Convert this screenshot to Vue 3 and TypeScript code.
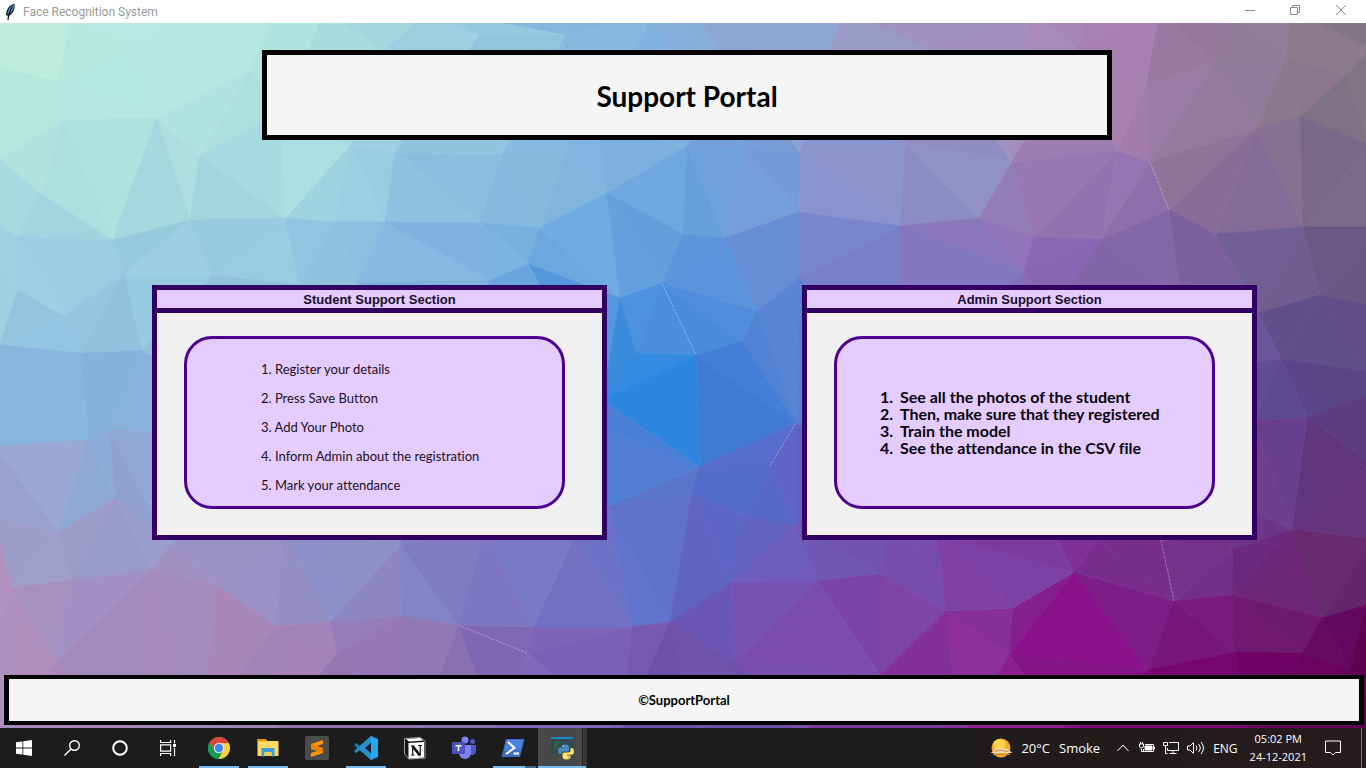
<script setup lang="ts">
type Point = [number, number]
type Tri = [number, number, number]

const appTitle = 'Face Recognition System'

const studentSteps = [
  'Register your details',
  'Press Save Button',
  'Add Your Photo',
  'Inform Admin about the registration',
  'Mark your attendance',
]

const adminSteps = [
  'See all the photos of the student',
  'Then, make sure that they registered',
  'Train the model',
  'See the attendance in the CSV file',
]

/* Corners of the facets, as x,y pairs */
const vertices: Point[] = `
-60,-20 300,-40 700,-40 1100,-40 1440,-20 1440,300 1440,800 1000,800 600,800 250,800 -60,800 -60,400 -60,180
0,68 57,82 70,23 135,45 63,120 157,118 200,155 112,240 190,220 40,193 0,160 18,237 124,274 213,275 18,290 63,316
285,218 350,145 395,152 385,222 335,222 325,10 250,70 383,52 430,10 282,110 0,345 80,353 142,351 300,285 358,282
502,154 480,223 540,228 528,264 568,150 607,193 597,130 687,146 683,234 725,238 744,147 800,151 799,212 799,278
662,283 620,298 757,311 900,226 905,143 490,280 565,35 480,35 655,10 725,60 695,10 830,48 845,10 930,50 1030,10
979,218 1012,162 1033,237 1102,239 1117,150 1150,162 1169,210 1216,234 1145,86 1215,63 1286,57 1346,74 1257,128
1300,116 1370,145 1303,227 1380,227 1024,272 1055,310 1182,300 1258,313 1320,295 1370,305 1370,48 1160,10 1225,10 1290,10
1078,48 109,430 88,440 -5,446 116,498 58,532 -5,518 12,588 70,580 152,570 218,586 55,662 276,626 330,621 337,653
402,616 400,545 283,530 170,545 458,625 527,653 533,627 632,627 670,622 636,353 696,355 742,341 700,467 692,494
770,466 796,423 602,427 607,506 745,517 795,525 731,582 818,581 880,574 575,535 735,662 485,530 602,400
946,611 1013,608 1074,572 1174,601 1232,595 1233,549 1292,529 1322,618 1366,605 1148,670 1235,652 1302,653
1009,655 1281,359 1307,417 1370,372 1370,393 1370,463 1240,364 1370,538 1098,540 1253,420 1350,670 880,675 455,350 350,400
450,450 300,440 900,400 900,480 1000,430 1100,400 1180,480 937,535 1161,540
-8,745 70,750 135,730 200,725 275,730 420,735 500,740 620,735 700,740 800,735 960,740 1070,735 1250,740`
  .trim()
  .split(/\s+/)
  .map((p) => p.split(',').map(Number) as Point)

/* Colour samples across the backdrop, as x,y,hex */
const samples = `
20,40,c0efdf 130,60,bdeade 200,50,b6e8e0 290,35,afe3e0 380,35,a5d9e0 430,35,9ccfe0 500,35,95c9e0 600,35,84b8df
700,35,85aedb 790,35,90a6d4 880,35,9b9bc8 970,35,a193c2 1040,35,a98abb 1120,40,a57faf 1200,40,97799f 1250,40,907a98
1320,40,8c7a8d 1355,60,807482 30,110,b7e9dd 110,90,b5e8df 220,90,b0e3df 1130,110,a57fae 1180,110,9a7ba3
1220,100,937b9d 1300,90,8e788f 1355,110,7f7284 20,150,b3e4df 80,160,aedfe0 115,170,aee3df 165,170,a5d7df
180,150,b1e0df 240,180,a4d6df 290,160,abdedf 370,180,99cde0 320,190,9dd2df 430,180,8ec1e0 525,180,86b8dd
570,200,82b6df 620,165,7eb3e0 650,195,70a8e0 700,200,68a0dc 740,190,72a2dc 770,200,749ad8 830,190,8792ce
880,170,8b94cb 950,170,9090c6 1000,190,9480bb 1060,180,9878b3 1110,190,9374b0 1200,170,907499 1230,200,846b97
1290,160,86708f 1330,180,7b6989 50,215,a2d6e0 10,260,9ed0e0 60,260,9bcee0 130,260,98cde0 240,250,98cce0
310,260,8ec3e0 400,250,84b8e0 470,260,7cb0e0 510,250,7ab1df 570,250,6ca8df 640,250,64a0de 700,260,5b95db
760,260,688ed6 830,250,7988cd 880,270,787fc8 940,260,8378c0 1000,250,8f72b8 1060,260,8a68b3 1130,250,8366a8
1200,260,7c619f 1270,260,705f92 1330,270,6c5985 30,320,94c6e0 100,320,92c4e0 60,350,8fc3e0 40,400,84b5de
120,400,80b3df 640,320,4c91dd 620,380,368be0 660,390,2a86df 720,390,3781db 700,320,4a8cda 740,310,528bdb
780,330,5784d4 780,370,5080d3 740,400,447bd6 1300,330,5f508a 1270,340,69559a 1270,390,5e4c92 1340,380,5a4789
1330,430,5d3b80 1260,450,6a4090 1340,470,60357c 1280,480,643e8c 1265,500,6d398a 40,470,98a6d2 90,400,87b2dc
90,480,8fa9d6 130,460,8aaad8 20,540,9f9fca 80,550,9e9dca 130,520,9a9ccb 640,460,5180d6 650,500,5c74ca
740,480,546cca 770,500,596ac8 790,470,6065c6 700,560,6064c3 640,570,5f71ca 40,620,a892bf 10,640,ae8eba
100,620,a08fc3 150,640,a68abb 190,620,a38dbd 230,650,a586b7 270,580,9a92c6 310,580,9690c8 350,570,8c8fca
380,600,8d84c2 300,650,a281b6 370,650,9478b6 430,590,8282c7 470,590,8477c1 520,590,787ac6 560,590,7470c4
590,560,6d73c8 500,640,8068b4 560,640,7d64b6 620,640,7858b2 700,640,6b58b8 770,620,7451b2 800,550,6c5bba
860,560,7353b2 850,620,7c45a9 900,620,7c42a5 930,560,7a4eb0 900,660,84309a 980,580,7e40a4 1000,560,7c3fa5
1050,560,802d95 980,640,883098 1040,620,86208f 1090,640,870f8a 1130,610,7e2088 1170,570,78308d 1120,560,7b3090
1130,650,7a1078 1200,630,78187c 1200,570,733088 1260,570,6e2a7f 1270,630,6e1a70 1340,570,682a6e 1300,600,6b206f
1340,630,650a62 1280,640,6b1468 1180,670,7a0070 1250,665,6e0063 1340,670,600055 1300,700,680060 1000,700,8f2090
700,700,7050a8 400,700,9673ac 100,700,a885b5 1364,700,5d004f`
  .trim()
  .split(/\s+/)
  .map((s) => {
    const [x, y, hex] = s.split(',')
    const n = parseInt(hex, 16)
    return { x: Number(x), y: Number(y), rgb: [n >> 16, (n >> 8) & 255, n & 255] }
  })

/* Bowyer-Watson triangulation */
function triangulate(points: Point[]): Tri[] {
  const all: Point[] = [...points, [-9000, -9000], [12000, -9000], [600, 15000]]
  const n = points.length
  const circle = (t: Tri) => {
    const [[ax, ay], [bx, by], [cx, cy]] = t.map((i) => all[i])
    const d = 2 * (ax * (by - cy) + bx * (cy - ay) + cx * (ay - by)) || 0.0001
    const a = ax * ax + ay * ay
    const b = bx * bx + by * by
    const c = cx * cx + cy * cy
    const x = (a * (by - cy) + b * (cy - ay) + c * (ay - by)) / d
    const y = (a * (cx - bx) + b * (ax - cx) + c * (bx - ax)) / d
    return { t, x, y, r: (ax - x) ** 2 + (ay - y) ** 2 }
  }
  let open = [circle([n, n + 1, n + 2])]
  for (let i = 0; i < n; i++) {
    const [px, py] = all[i]
    const edges = new Map<string, [number, number]>()
    const kept: typeof open = []
    for (const c of open) {
      if ((px - c.x) ** 2 + (py - c.y) ** 2 >= c.r) {
        kept.push(c)
        continue
      }
      for (const [a, b] of [[c.t[0], c.t[1]], [c.t[1], c.t[2]], [c.t[2], c.t[0]]]) {
        const key = a < b ? `${a}-${b}` : `${b}-${a}`
        if (edges.has(key)) edges.delete(key)
        else edges.set(key, [a, b])
      }
    }
    open = kept
    edges.forEach(([a, b]) => open.push(circle([a, b, i])))
  }
  return open.map((c) => c.t).filter((t) => t.every((i) => i < n))
}

function colourAt(x: number, y: number, shade: number): string {
  const sum = [0, 0, 0]
  let total = 0
  for (const s of samples) {
    const w = 1 / ((s.x - x) ** 2 + (s.y - y) ** 2 + 60) ** 2
    total += w
    s.rgb.forEach((v, k) => (sum[k] += v * w))
  }
  return `rgb(${sum.map((v) => Math.max(0, Math.round(v / total + shade))).join(',')})`
}

const clamp = (v: number, low: number, high: number) => Math.min(high, Math.max(low, v))

const facets = triangulate(vertices).map((t) => {
  const pts = t.map((i) => vertices[i])
  const cx = clamp((pts[0][0] + pts[1][0] + pts[2][0]) / 3, 5, 1361)
  const cy = clamp((pts[0][1] + pts[1][1] + pts[2][1]) / 3, 30, 715)
  const shade = (Math.round(cx * 7 + cy * 13) % 5) - 2
  return { points: pts.map((p) => p.join(',')).join(' '), fill: colourAt(cx, cy, shade) }
})
</script>

<template>
  <div class="screen">
    <header class="titlebar">
      <svg class="feather" viewBox="0 0 12 18" aria-hidden="true">
        <path d="M10.500 1C6 1 2 6 2 12l2 1C8 12 11.500 7 10.500 1z" fill="#15202f" />
        <path d="M9.800 2C5.500 4 3.500 8 3.500 11.500 8 9.500 10 6 9.800 2z" fill="#6f9dd6" />
        <path d="M8.500 4C6 7 4.500 11 4 17" fill="none" stroke="#0a0d14" stroke-width="1.200" />
      </svg>
      <span class="apptitle">{{ appTitle }}</span>
      <div class="controls">
        <button aria-label="Minimize"><svg viewBox="0 0 12 12"><path d="M1 6.500h10" /></svg></button>
        <button aria-label="Restore"><svg viewBox="0 0 12 12"><path d="M1.500 3.500h7v7h-7zM3.500 3.500v-2h7v7h-2" /></svg></button>
        <button aria-label="Close"><svg viewBox="0 0 12 12"><path d="M1 1l10 10M11 1L1 11" /></svg></button>
      </div>
    </header>

    <main class="portal">
      <svg class="backdrop" viewBox="0 23 1366 705" preserveAspectRatio="none" aria-hidden="true">
        <polygon v-for="(f, i) in facets" :key="i" :points="f.points" :fill="f.fill" :stroke="f.fill" stroke-width="0.700" />
        <path
          d="M662 283L696 355M796 423L770 466M1150 162L1169 210M1161 540L1174 601M458 625L527 653"
          fill="none" stroke="#fff" stroke-opacity="0.300" stroke-dasharray="3 1"
        />
      </svg>

      <h1 class="banner">Support Portal</h1>

      <div class="cards">
        <section class="card">
          <h2>Student Support Section</h2>
          <div class="cardbody">
            <ol class="panel student">
              <li v-for="(step, i) in studentSteps" :key="step">{{ i + 1 }}. {{ step }}</li>
            </ol>
          </div>
        </section>
        <section class="card">
          <h2>Admin Support Section</h2>
          <div class="cardbody">
            <ol class="panel admin">
              <li v-for="(step, i) in adminSteps" :key="step"><span class="num">{{ i + 1 }}.</span>{{ step }}</li>
            </ol>
          </div>
        </section>
      </div>

      <footer class="copyright">©SupportPortal</footer>
    </main>

    <nav class="taskbar" aria-label="Taskbar">
      <button class="sys" aria-label="Start">
        <svg width="16" height="16" viewBox="0 0 16 16" fill="#fff"><path d="M0 2.300L6.500 1.400V7.500H0zM7.300 1.200L16 0v7.500H7.300zM0 8.400h6.500v6.200L0 13.700zM7.300 8.400H16V16l-8.700-1.200z" /></svg>
      </button>
      <button class="sys" aria-label="Search">
        <svg width="16" height="16" viewBox="0 0 16 16" fill="none" stroke="#fff" stroke-width="1.400"><circle cx="10.500" cy="5.500" r="4.800" /><path d="M7 9L0.500 15.500" /></svg>
      </button>
      <button class="sys" aria-label="Cortana">
        <svg width="16" height="16" viewBox="0 0 16 16" fill="none" stroke="#fff" stroke-width="2"><circle cx="8" cy="8" r="6.800" /></svg>
      </button>
      <button class="sys" aria-label="Task View">
        <svg width="16" height="16" viewBox="0 0 16 16" fill="none" stroke="#fff" stroke-width="1.200"><path d="M0.600 0v2.500h10V0M0.600 16v-2.500h10V16M0.600 4.800h10v6.400h-10zM14.500 0v3.500M14.500 8v8" /><path d="M13 4h3v3h-3z" fill="#fff" stroke="none" /></svg>
      </button>

      <div class="apps">
        <button class="app running" aria-label="Google Chrome">
          <svg width="24" height="24" viewBox="0 0 24 24">
            <circle cx="12" cy="12" r="11" fill="#4caf50" />
            <path d="M2.500 6.500A11 11 0 0 1 21.500 6.500L21.800 7H12L8 14.500z" fill="#db4437" />
            <path d="M21.800 7A11 11 0 0 1 11.500 23L16.500 14 12 7z" fill="#ffcd40" />
            <path d="M2.500 6.500L7.800 15 16 14.500 11.500 23A11 11 0 0 1 2.500 6.500z" fill="#0f9d58" />
            <circle cx="12" cy="12" r="5.200" fill="#f1f1f1" /><circle cx="12" cy="12" r="4.200" fill="#4285f4" />
          </svg>
        </button>
        <button class="app running" aria-label="File Explorer">
          <svg width="24" height="24" viewBox="0 0 24 24">
            <path d="M1.500 3h8l2 2h11v15h-21z" fill="#ffd968" /><path d="M1.500 3h8l1.500 2.500H1.500z" fill="#e2a100" />
            <path d="M5.500 12h13v8.500h-3V16h-7v4.500h-3z" fill="#3e9bd8" /><path d="M8.500 16h7v4h-7z" fill="#f2cb50" />
          </svg>
        </button>
        <button class="app" aria-label="Sublime Text">
          <svg width="24" height="24" viewBox="0 0 24 24">
            <rect width="24" height="24" rx="2" fill="#4b4b4b" />
            <path d="M18 4L6 8v5l6.500 2L6 17v4l12-4v-5l-6.500-2L18 8z" fill="#ff9800" />
            <path d="M6 8v5l12 4v-5z" fill="#e98200" />
          </svg>
        </button>
        <button class="app running" aria-label="Visual Studio Code">
          <svg width="24" height="24" viewBox="0 0 24 24">
            <path d="M17 0L6 10 2 7 0.500 8v1.500L17 24z" fill="#1576bc" />
            <path d="M17 24L6 14l-4 3-1.500-1v-1.500L17 0z" fill="#248fd1" />
            <path d="M17 0l7 3v18l-7 3z" fill="#2aa6ed" /><path d="M17 7v10l-6-5z" fill="#1e1e1e" />
          </svg>
        </button>
        <button class="app" aria-label="Notion">
          <svg width="24" height="24" viewBox="0 0 24 24">
            <path d="M1.500 2.500L17 1.500l5 3.500v17L6 23l-4.500-5z" fill="#161616" stroke="#d8d8d8" stroke-width="0.700" />
            <path d="M3 3l14-1 3.500 2.500L6 5.500z" fill="#fff" /><path d="M5.500 7L21 6v15.500L5.500 22.500z" fill="#fff" />
            <path d="M8 10h2.500M9.700 10v9M8 19h3.500M15 9.500h4M17.200 9.500v10" stroke="#111" stroke-width="1.200" fill="none" />
            <path d="M9.500 10l7.500 9.500" stroke="#111" stroke-width="2.800" />
          </svg>
        </button>
        <button class="app" aria-label="Microsoft Teams">
          <svg width="24" height="24" viewBox="0 0 24 24">
            <circle cx="20.500" cy="5.500" r="2.500" fill="#5059c9" /><circle cx="13" cy="4" r="3.500" fill="#7b83eb" />
            <path d="M18 9h6v6.500a4 4 0 0 1-6 3z" fill="#5059c9" /><path d="M7 9h12v8a6 6 0 0 1-12 0z" fill="#7b83eb" />
            <rect y="6" width="13" height="12" rx="1" fill="#4b53bc" /><path d="M3.500 9.700h6M6.500 9.700V15" stroke="#fff" stroke-width="1.600" />
          </svg>
        </button>
        <button class="app running grouped" aria-label="PowerShell">
          <svg width="24" height="24" viewBox="0 0 24 24">
            <path d="M5 3h18.500L19 21H0.500z" fill="#3d6fc8" /><path d="M5.500 4h17L20 13 3 15z" fill="#4a83dc" />
            <path d="M7 6l6.500 6-8.500 6M12.500 17.500h5.500" fill="none" stroke="#fff" stroke-width="2" />
          </svg>
        </button>
        <button class="app active" aria-label="Python">
          <svg width="24" height="24" viewBox="0 0 24 24">
            <rect x="1" y="1" width="22" height="17" fill="#35474f" /><rect x="1" y="1" width="22" height="2" fill="#1689c9" />
            <path d="M4 6.500h7M4 9h4M4 12h3" stroke="#267a3d" stroke-width="1.300" />
            <path d="M13 9q2.500-1 5 0 1 .5 1 2v3q0 1.500-1.500 1.500H13q-1.500 0-1.500 2.500H10q-2-.5-2-3.500t2.500-3H15v-.700h-3.500V10q0-.7 1.500-1z" fill="#4a8cc4" />
            <path d="M20.500 12H22q2 .5 2 3.500t-2.500 3.200H17v.800h3.500v1.500Q20 23.500 16.500 23.500T12.500 21v-3q0-1.500 1.500-1.500h4.500q2 0 2-2z" fill="#ffe168" />
            <circle cx="13.500" cy="10.300" r="0.700" fill="#fff" /><circle cx="18.500" cy="21.500" r="0.700" fill="#a08a30" />
          </svg>
        </button>
      </div>

      <div class="tray">
        <button class="weather">
          <svg width="24" height="24" viewBox="0 0 24 24" aria-hidden="true">
            <circle cx="12" cy="12" r="9.500" fill="#f5ad25" /><circle cx="10.500" cy="9" r="6" fill="#ffd24b" />
            <path d="M1 17q3-1 4-2 2-4 6-3 3 1 5 1 3-1 5 2 2 1 2 2z" fill="#ecd9be" />
            <path d="M4 18.500h17M6 15.500q4-2 8-1 3 1.500 6 .5" fill="none" stroke="#c98a3c" stroke-width="1" />
          </svg>
          <span>20°C</span><span>Smoke</span>
        </button>
        <button aria-label="Show hidden icons">
          <svg width="12" height="16" viewBox="0 0 12 16"><path d="M0.500 11L6 5l5.500 6" /></svg>
        </button>
        <button aria-label="Battery">
          <svg width="16" height="16" viewBox="0 0 16 16"><path d="M6 4.500h8.500v7h-10V9M2.500 8.500v3h2M1.500 2v2M3.500 2v2M0.500 4h4v2q0 2-2 2t-2-2zM15.500 6.500v3" /><path d="M6 6h7v4H6z" fill="#fff" /></svg>
        </button>
        <button aria-label="Network">
          <svg width="16" height="16" viewBox="0 0 16 16"><path d="M6 2.500h9.500v8h-11V8M10 10.500v3M6.500 13.500h7M0.500 2.500h4v3h-4zM2.500 5.500v8h2" /></svg>
        </button>
        <button aria-label="Volume">
          <svg width="18" height="16" viewBox="0 0 18 16"><path d="M0.500 6h2.500l3.500-3.500v11L3 10H0.500zM9 5.500q2 2.500 0 5M11.500 4q3.500 4 0 8M14 2q5 6 0 12" /></svg>
        </button>
        <button class="lang">ENG</button>
        <button class="clock"><span>05:02 PM</span><span>24-12-2021</span></button>
        <button class="notify" aria-label="Notifications">
          <svg width="16" height="16" viewBox="0 0 16 16"><path d="M0.500 1h15v11.500h-5L8 15l-2.500-2.500h-5z" /></svg>
        </button>
      </div>
    </nav>
  </div>
</template>

<style>
html, body { margin: 0; }
</style>

<style scoped>
* { box-sizing: border-box; }
.screen { display: flex; flex-direction: column; min-height: 100vh; font-family: "Open Sans", "Noto Sans", sans-serif; font-variant-ligatures: none; }
button { border: 0; padding: 0; margin: 0; background: none; color: inherit; font: inherit; display: flex; align-items: center; justify-content: center; }

.titlebar { height: 23px; flex: none; display: flex; align-items: center; background: #fff; padding: 0 2px 0 4px; }
.feather { width: 12px; height: 18px; margin-right: 7px; }
.apptitle { font-family: Roboto, sans-serif; font-size: 12px; line-height: 20px; color: #999; }
.controls { display: flex; align-self: flex-start; margin-left: auto; }
.controls button { width: 45px; height: 20px; }
.controls button:last-child { width: 47px; }
.controls svg { width: 12px; height: 12px; fill: none; stroke: #8c8c8c; }

.portal { position: relative; flex: 1; display: flex; flex-direction: column; padding: 27px 2px 3px 4px; overflow: hidden; }
.backdrop { position: absolute; inset: 0; width: 100%; height: 100%; }
.banner, .cards, .copyright { position: relative; font-family: "Comic Sans MS", Lato, sans-serif; }
.banner { margin: 0 252px 0 258px; height: 90px; display: flex; align-items: center; justify-content: center; border: 5px solid #000; background: #f5f5f5; color: #000; font-size: 28px; font-weight: bold; line-height: 36px; padding-top: 2px; }
.cards { display: flex; gap: 195px; margin: 145px 107px auto 148px; }
.card { flex: 1; min-width: 0; border: 5px solid #310062; background: #f0f0f0; }
.card h2 { margin: 0; height: 23px; border-bottom: 5px solid #310062; background: #e4ccff; color: #1b0b2a; text-align: center; font-family: "Liberation Sans", Arial, sans-serif; font-size: 13px; font-weight: bold; line-height: 20px; }
.cardbody { padding: 23px 37px 26px 27px; }
.panel { margin: 0; height: 173px; list-style: none; border: 3px solid #4b0091; border-radius: 28px; background: #e4ccff; }
.student { padding: 16px 0 0 74px; color: #1b1024; font-size: 13px; line-height: 29px; }
.admin { padding: 49px 0 0 43px; color: #08040c; font-size: 16px; font-weight: bold; line-height: 17px; }
.panel li { white-space: nowrap; }
.num { display: inline-block; width: 20px; }
.copyright { height: 50px; display: flex; align-items: center; justify-content: center; border: 4px solid #000; border-width: 4px 5px; background: #f5f5f5; color: #000; font-size: 13px; font-weight: bold; line-height: 16px; }

.taskbar { height: 40px; flex: none; display: flex; background: linear-gradient(90deg, #1c1c1c 60%, #261b1c); color: #fff; }
.sys { width: 48px; }
.apps { display: flex; margin-left: 3px; }
.app { width: 49px; position: relative; padding-right: 1px; }
.app::after { content: ""; position: absolute; left: 4px; right: 5px; bottom: 0; height: 2px; }
.running::after, .active::after { background: #76b9ed; }
.grouped::after { right: 2px; background: linear-gradient(90deg, #76b9ed 32px, #456a87 32px); }
.active { background: linear-gradient(90deg, #484848 44px, #222 44px, #222 45px, #383838 45px); }
.active::after { left: 0; right: 1px; }
.tray { display: flex; margin-left: auto; padding-right: 4px; }
.tray svg { fill: none; stroke: #fff; flex: none; }
.tray .weather svg { stroke: none; margin-right: -1px; }
.tray button { margin-right: 8px; }
.tray button:nth-child(2) { margin-right: 10px; }
.tray .weather { margin-right: 17px; font-size: 13px; gap: 9px; }
.tray .lang { margin-right: 12px; font-size: 12px; }
.tray .clock { margin-right: 18px; flex-direction: column; font-size: 11px; line-height: 18px; }
.tray .notify { margin-right: 0; padding-right: 20px; border-right: 1px solid #777; }
</style>
